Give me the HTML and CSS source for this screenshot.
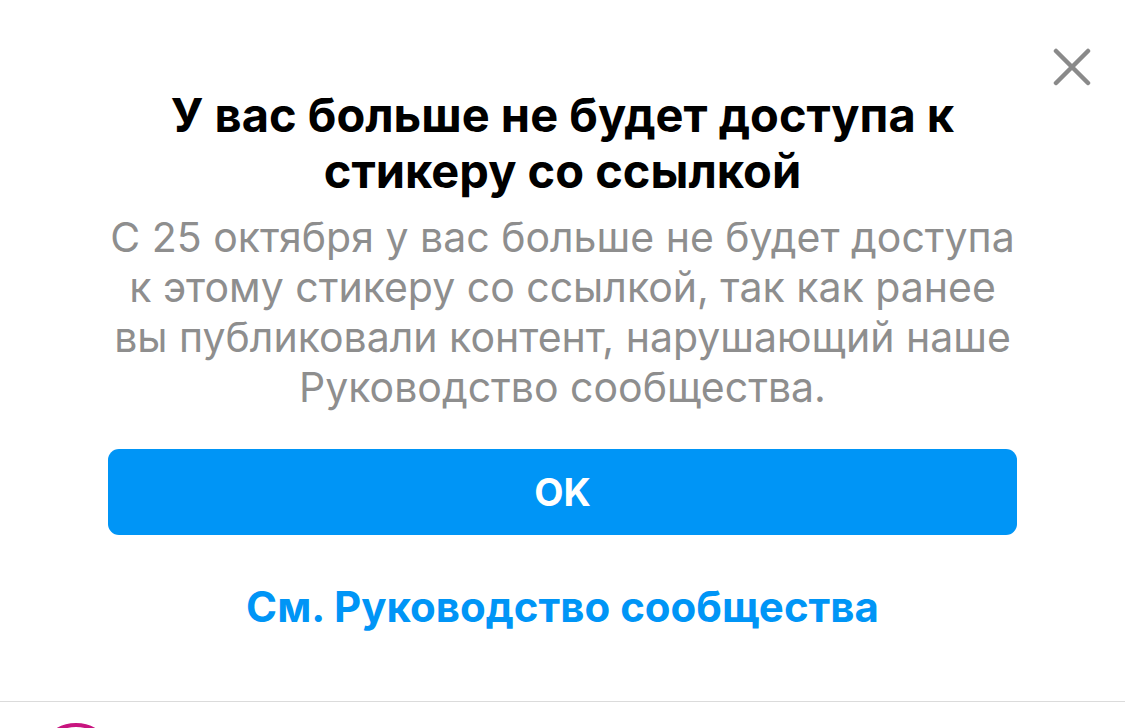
FILE: index.html
```html
<!DOCTYPE html>
<html lang="ru">
<head>
  <meta charset="UTF-8">
  <meta name="viewport" content="width=device-width, initial-scale=1.0">
  <title>Стикер со ссылкой</title>
  <link rel="stylesheet" href="styles.css">
</head>
<body>
  <div class="sheet">
    <button class="close" aria-label="Закрыть">
      <svg width="38" height="38" viewBox="0 0 38 38">
        <path d="M3 3 L35 35 M35 3 L3 35" stroke="#8a8a8a" stroke-width="4.5" stroke-linecap="round" fill="none"/>
      </svg>
    </button>

    <div class="dialog">
      <h1 class="title">У вас больше не будет доступа к<br>стикеру со ссылкой</h1>
      <p class="message">С 25 октября у вас больше не будет доступа<br>к этому стикеру со ссылкой, так как ранее<br>вы публиковали контент, нарушающий наше<br>Руководство сообщества.</p>
      <button class="ok">OK</button>
      <a class="guide" href="#">См. Руководство сообщества</a>
    </div>
  </div>

  <div class="divider"></div>
  <div class="list-row">
    <div class="avatar"></div>
  </div>
</body>
</html>
```

FILE: styles.css
```css
html, body {
  height: 728px;
  overflow: hidden;
}

body {
  margin: 0;
  background: #fff;
  font-family: Inter, "Noto Sans", sans-serif;
}

.sheet {
  position: relative;
  height: 701px;
}

.close {
  position: absolute;
  top: 48px;
  right: 34px;
  padding: 0;
  border: none;
  background: none;
  cursor: pointer;
}

.close svg {
  display: block;
}

.dialog {
  display: flex;
  flex-direction: column;
  align-items: center;
  padding-top: 87px;
}

.title {
  margin: 0;
  font-size: 47px;
  line-height: 56px;
  font-weight: 700;
  color: #000;
  text-align: center;
  white-space: nowrap;
}

.message {
  margin: 13px 0 0;
  font-size: 41px;
  line-height: 50px;
  font-weight: 400;
  color: #8e8e8e;
  text-align: center;
  white-space: nowrap;
}

.ok {
  margin-top: 37px;
  width: 909px;
  height: 86px;
  border: none;
  border-radius: 11px;
  background: #0095f6;
  color: #fff;
  font-family: inherit;
  font-size: 38px;
  font-weight: 700;
  cursor: pointer;
}

.guide {
  margin-top: 47px;
  font-size: 42px;
  line-height: 50px;
  font-weight: 700;
  color: #0095f6;
  text-decoration: none;
  white-space: nowrap;
}

.divider {
  height: 1px;
  background: #dbdbdb;
}

.list-row {
  height: 26px;
  overflow: hidden;
  padding: 21px 0 0 37px;
  box-sizing: border-box;
}

.avatar {
  width: 78px;
  height: 78px;
  box-sizing: border-box;
  border-radius: 50%;
  border: 4px solid #c8157f;
  background: #fff;
}
```
